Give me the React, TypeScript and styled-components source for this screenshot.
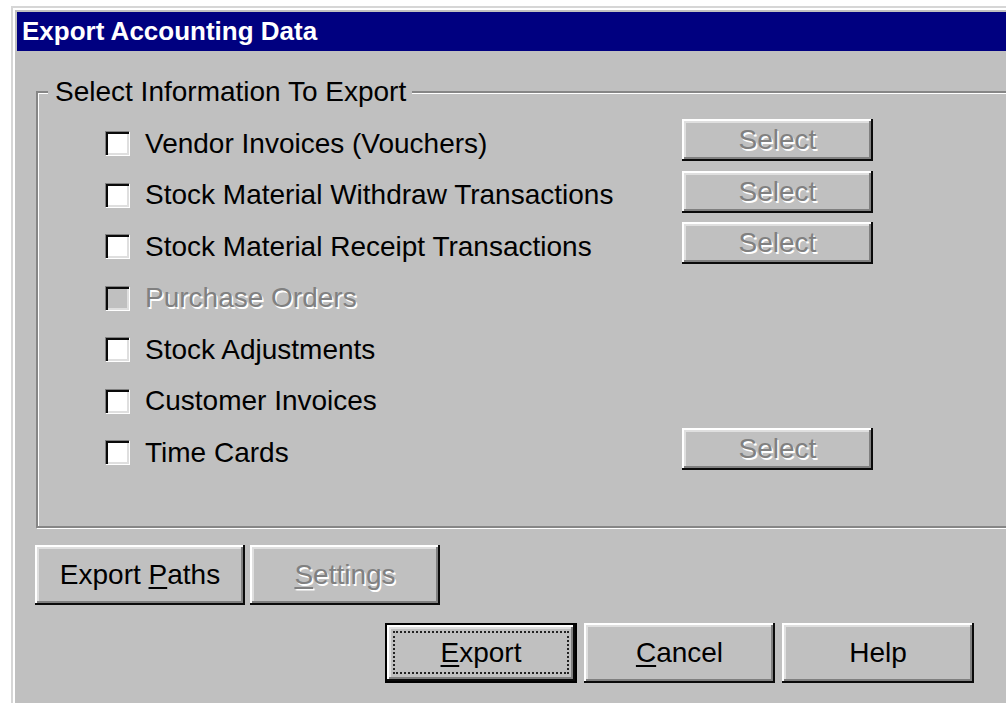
import styled, { createGlobalStyle, css } from "styled-components";

const GlobalStyle = createGlobalStyle`
  html, body {
    margin: 0;
    background: #fff;
    overflow: hidden;
  }
  body {
    font-family: "Liberation Sans", Arial, sans-serif;
  }
`;

const Screen = styled.div`
  height: 703px;
  padding: 6px 0 0 11px;
  box-sizing: border-box;
  overflow: hidden;
`;

const Window = styled.div`
  width: 1060px;
  height: 760px;
  box-sizing: border-box;
  padding: 4px;
  background: #c0c0c0;
  box-shadow: inset 2px 2px 0 #d6d6d6, inset 4px 4px 0 #fff;
`;

const TitleBar = styled.div`
  margin: 2px;
  height: 39px;
  padding-left: 5px;
  display: flex;
  align-items: center;
  background: #000080;
  color: #fff;
  font-size: 26px;
  font-weight: bold;
`;

const DialogBody = styled.div`
  padding: 38px 20px 0 20px;
`;

const GroupBox = styled.div`
  position: relative;
  margin-left: 1px;
  height: 437px;
  box-sizing: border-box;
  padding: 25px 0 0 67px;
  border: 2px solid #868686;
  box-shadow: inset 1px 1px 0 #fff, 1px 1px 0 #fff;
`;

const Legend = styled.span`
  position: absolute;
  top: -16px;
  left: 10px;
  padding: 0 6px 0 7px;
  background: #c0c0c0;
  font-size: 28px;
  line-height: 30px;
  color: #000;
`;

const disabledText = css`
  color: #808080;
  text-shadow: 1.5px 1.5px 0 #fff;
`;

const Row = styled.div`
  display: grid;
  grid-template-columns: 25px 522px 191px;
  column-gap: 15px;
  align-items: center;
  height: 51.5px;
`;

const CheckBox = styled.span<{ $disabled?: boolean }>`
  display: block;
  width: 25px;
  height: 25px;
  box-sizing: border-box;
  border: 1px solid;
  border-color: #808080 #fff #fff #808080;
  background: ${({ $disabled }) => ($disabled ? "#c0c0c0" : "#fff")};
  box-shadow: inset 2px 2px 0 #0a0a0a, inset -2px -2px 0 #dfdfdf;
`;

const Label = styled.span<{ $disabled?: boolean }>`
  font-size: 28px;
  line-height: 32px;
  color: #000;
  white-space: nowrap;
  ${({ $disabled }) => $disabled && disabledText}
`;

const Button = styled.button<{ $w: number; $h: number; $default?: boolean }>`
  position: relative;
  width: ${({ $w }) => $w}px;
  height: ${({ $h }) => $h}px;
  padding: 0;
  margin: 0;
  border: none;
  background: #c0c0c0;
  font-family: inherit;
  font-size: 28px;
  color: #000;
  cursor: default;
  box-shadow: inset -2px -2px 0 #0a0a0a, inset 2px 2px 0 #fff,
    inset -4px -4px 0 #808080, inset 4px 4px 0 #dfdfdf;

  &:disabled {
    ${disabledText}
  }

  ${({ $default }) =>
    $default &&
    css`
      box-shadow: inset 0 0 0 2px #000, inset -4px -4px 0 #0a0a0a,
        inset 4px 4px 0 #fff, inset -6px -6px 0 #808080,
        inset 6px 6px 0 #dfdfdf;

      &::after {
        content: "";
        position: absolute;
        inset: 8px 8px 9px 8px;
        border: 2px dotted #222;
      }
    `}

  u {
    text-decoration-thickness: 2px;
    text-underline-offset: 3px;
  }
`;

// the per-row Select buttons sit a little above the row's centre line
const SelectButton = styled(Button)`
  align-self: start;
  margin-top: 1px;
`;

const ButtonRow = styled.div<{ $top: number; $indent?: number }>`
  display: flex;
  gap: ${({ $indent }) => ($indent ? 7 : 5)}px;
  margin-top: ${({ $top }) => $top}px;
  margin-left: ${({ $indent }) => $indent ?? 0}px;
`;

type Item = { label: string; select?: boolean; disabled?: boolean };

const items: Item[] = [
  { label: "Vendor Invoices (Vouchers)", select: true },
  { label: "Stock Material Withdraw Transactions", select: true },
  { label: "Stock Material Receipt Transactions", select: true },
  { label: "Purchase Orders", disabled: true },
  { label: "Stock Adjustments" },
  { label: "Customer Invoices" },
  { label: "Time Cards", select: true },
];

export default function App() {
  return (
    <>
      <GlobalStyle />
      <Screen>
        <Window>
          <TitleBar>Export Accounting Data</TitleBar>
          <DialogBody>
            <GroupBox>
              <Legend>Select Information To Export</Legend>
              {items.map((it) => (
                <Row key={it.label}>
                  <CheckBox $disabled={it.disabled} />
                  <Label $disabled={it.disabled}>{it.label}</Label>
                  {it.select ? (
                    <SelectButton $w={191} $h={42} disabled>
                      Select
                    </SelectButton>
                  ) : (
                    <span />
                  )}
                </Row>
              ))}
            </GroupBox>
            <ButtonRow $top={17}>
              <Button $w={210} $h={60}>
                Export <u>P</u>aths
              </Button>
              <Button $w={190} $h={60} disabled>
                <u>S</u>ettings
              </Button>
            </ButtonRow>
            <ButtonRow $top={18} $indent={350}>
              <Button $w={192} $h={60} $default>
                <u>E</u>xport
              </Button>
              <Button $w={191} $h={60}>
                <u>C</u>ancel
              </Button>
              <Button $w={192} $h={60}>
                Help
              </Button>
            </ButtonRow>
          </DialogBody>
        </Window>
      </Screen>
    </>
  );
}
